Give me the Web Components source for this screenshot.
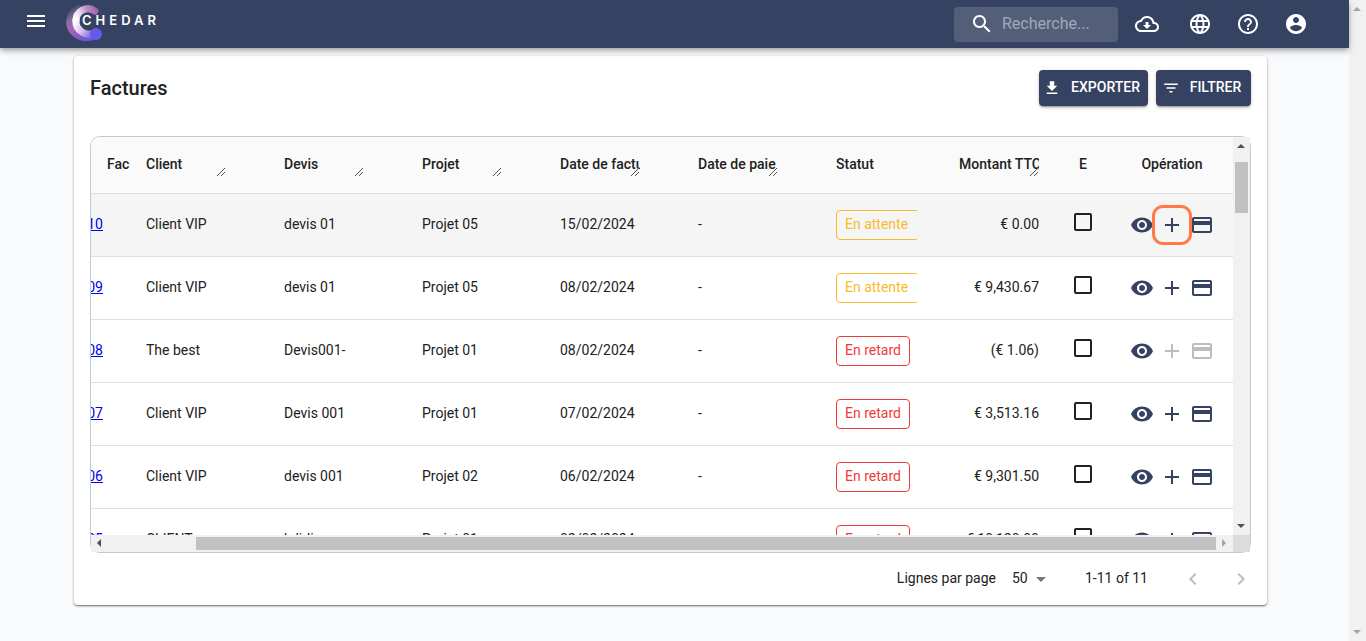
<!DOCTYPE html>
<html lang="fr">
<head>
<meta charset="utf-8">
<title>Chedar – Factures</title>
<style>
  body { margin: 0; font-family: Roboto, "Liberation Sans", sans-serif; font-size: 14px; color: #212121; background: #f9fafc; }
</style>
</head>
<body>
<chedar-app></chedar-app>
<script>
const ICONS = {
  menu: 'M3 18h18v-2H3v2zm0-5h18v-2H3v2zm0-7v2h18V6H3z',
  search: 'M15.5 14h-.79l-.28-.27C15.41 12.59 16 11.11 16 9.5 16 5.91 13.09 3 9.5 3S3 5.91 3 9.5 5.91 16 9.5 16c1.61 0 3.09-.59 4.23-1.57l.27.28v.79l5 4.99L20.49 19l-4.99-5zm-6 0C7.01 14 5 11.99 5 9.5S7.01 5 9.5 5 14 7.01 14 9.5 11.99 14 9.5 14z',
  cloud: 'M19.35 10.04C18.67 6.59 15.64 4 12 4 9.11 4 6.6 5.64 5.35 8.04 2.34 8.36 0 10.91 0 14c0 3.31 2.69 6 6 6h13c2.76 0 5-2.24 5-5 0-2.64-2.05-4.78-4.65-4.96zM19 18H6c-2.21 0-4-1.79-4-4 0-2.05 1.53-3.76 3.56-3.97l1.07-.11.5-.95C8.08 7.14 9.94 6 12 6c2.62 0 4.88 1.86 5.39 4.43l.3 1.5 1.53.11c1.56.1 2.78 1.41 2.78 2.96 0 1.65-1.35 3-3 3zm-5.55-8h-2.9v3H8l4 4 4-4h-2.55z',
  globe: 'M11.99 2C6.47 2 2 6.48 2 12s4.47 10 9.99 10C17.52 22 22 17.52 22 12S17.52 2 11.99 2zm6.93 6h-2.95c-.32-1.25-.78-2.45-1.38-3.56 1.84.63 3.37 1.91 4.33 3.56zM12 4.04c.83 1.2 1.48 2.53 1.91 3.96h-3.82c.43-1.43 1.08-2.76 1.91-3.96zM4.26 14C4.1 13.36 4 12.69 4 12s.1-1.36.26-2h3.38c-.08.66-.14 1.32-.14 2s.06 1.34.14 2H4.26zm.82 2h2.95c.32 1.25.78 2.45 1.38 3.56-1.84-.63-3.37-1.9-4.33-3.56zm2.95-8H5.08c.96-1.66 2.49-2.93 4.33-3.56C8.81 5.55 8.35 6.75 8.03 8zM12 19.96c-.83-1.2-1.48-2.53-1.91-3.96h3.82c-.43 1.43-1.08 2.76-1.91 3.96zM14.34 14H9.66c-.09-.66-.16-1.32-.16-2s.07-1.35.16-2h4.68c.09.65.16 1.32.16 2s-.07 1.34-.16 2zm.25 5.56c.6-1.11 1.06-2.31 1.38-3.56h2.95c-.96 1.65-2.49 2.93-4.33 3.56zM16.36 14c.08-.66.14-1.32.14-2s-.06-1.34-.14-2h3.38c.16.64.26 1.31.26 2s-.1 1.36-.26 2h-3.38z',
  help: 'M11 18h2v-2h-2v2zm1-16C6.48 2 2 6.48 2 12s4.48 10 10 10 10-4.48 10-10S17.52 2 12 2zm0 18c-4.41 0-8-3.59-8-8s3.59-8 8-8 8 3.59 8 8-3.59 8-8 8zm0-14c-2.21 0-4 1.79-4 4h2c0-1.1.9-2 2-2s2 .9 2 2c0 2-3 1.75-3 5h2c0-2.25 3-2.5 3-5 0-2.21-1.79-4-4-4z',
  account: 'M12 2C6.48 2 2 6.48 2 12s4.48 10 10 10 10-4.48 10-10S17.52 2 12 2zm0 3c1.66 0 3 1.34 3 3s-1.34 3-3 3-3-1.34-3-3 1.34-3 3-3zm0 14.2c-2.5 0-4.71-1.28-6-3.22.03-1.99 4-3.08 6-3.08 1.99 0 5.97 1.09 6 3.08-1.29 1.94-3.5 3.22-6 3.22z',
  download: 'M19 9h-4V3H9v6H5l7 7 7-7zM5 18v2h14v-2H5z',
  filter: 'M10 18h4v-2h-4v2zM3 6v2h18V6H3zm3 7h12v-2H6v2z',
  eye: 'M12 4.5C7 4.5 2.73 7.61 1 12c1.73 4.39 6 7.5 11 7.5s9.27-3.11 11-7.5c-1.73-4.39-6-7.5-11-7.5zM12 17c-2.76 0-5-2.24-5-5s2.24-5 5-5 5 2.24 5 5-2.24 5-5 5zm0-8c-1.66 0-3 1.34-3 3s1.34 3 3 3 3-1.34 3-3-1.34-3-3-3z',
  plus: 'M19 13h-6v6h-2v-6H5v-2h6V5h2v6h6v2z',
  card: 'M20 4H4c-1.11 0-1.99.89-1.99 2L2 18c0 1.11.89 2 2 2h16c1.11 0 2-.89 2-2V6c0-1.11-.89-2-2-2zm0 14H4v-6h16v6zm0-10H4V6h16v2z',
  drop: 'M7 10l5 5 5-5z',
  left: 'M15.41 7.41L14 6l-6 6 6 6 1.41-1.41L10.83 12z',
  right: 'M10 6L8.59 7.41 13.17 12l-4.58 4.59L10 18l6-6z'
};

class Base extends HTMLElement {
  connectedCallback() {
    if (!this.shadowRoot) this.attachShadow({ mode: 'open' }).innerHTML = this.view();
  }
}

/* Square glyph; --size sets its side */
customElements.define('ui-icon', class extends Base {
  view() {
    return `<style>:host{display:block;width:var(--size,24px);height:var(--size,24px);flex:none}svg{display:block;width:100%;height:100%;fill:currentColor}</style>
    <svg viewBox="0 0 24 24" aria-hidden="true"><path d="${ICONS[this.getAttribute('name')]}"/></svg>`;
  }
});

customElements.define('brand-logo', class extends Base {
  view() {
    return `<style>
      :host{display:grid;align-items:start}
      svg,span{grid-area:1/1}
      svg{display:block;width:42px;height:40px}
      span{padding:9px 0 0 16px;color:#fff;font:600 13px/16px Inter,sans-serif;letter-spacing:4px}
    </style>
    <svg viewBox="0 0 42 40" aria-hidden="true">
      <defs>
        <linearGradient id="o" gradientUnits="userSpaceOnUse" x1="6" y1="2" x2="28" y2="36">
          <stop offset="0" stop-color="#8b7fb0" stop-opacity="0"/><stop offset=".3" stop-color="#9d78b4" stop-opacity=".8"/><stop offset=".5" stop-color="#a864b4"/><stop offset=".75" stop-color="#8459cc"/><stop offset="1" stop-color="#6559ea"/>
        </linearGradient>
        <linearGradient id="i" gradientUnits="userSpaceOnUse" x1="8" y1="18" x2="31" y2="8">
          <stop offset="0" stop-color="#fff"/><stop offset=".3" stop-color="#eedfee"/><stop offset=".65" stop-color="#bb8fc4"/><stop offset="1" stop-color="#a560b0"/>
        </linearGradient>
        <linearGradient id="b" gradientUnits="userSpaceOnUse" x1="9" y1="18" x2="29" y2="32">
          <stop offset="0" stop-color="#fff"/><stop offset=".45" stop-color="#d6c3ea"/><stop offset=".75" stop-color="#9a88e4"/><stop offset="1" stop-color="#6559ea"/>
        </linearGradient>
      </defs>
      <path d="M12 6A16 16 0 0 0 4 20A16 16 0 0 0 20 34Q27 34 31 31" fill="none" stroke="url(#o)" stroke-width="8" stroke-linecap="round"/>
      <path d="M29 8A12 12 0 0 0 10 18" fill="none" stroke="url(#i)" stroke-width="7"  stroke-linecap="round"/>
      <path d="M10 17A13 13 0 0 0 30 29" fill="none" stroke="url(#b)" stroke-width="7" stroke-linecap="round"/>
      <circle cx="30" cy="31" r="6" fill="#6559ea"/>
    </svg><span>CHEDAR</span>`;
  }
});

customElements.define('app-bar', class extends Base {
  view() {
    return `<style>
      :host{display:block;position:relative;z-index:1;background:#364262;color:#fff;box-shadow:0 2px 4px -1px rgba(0,0,0,.2),0 4px 5px rgba(0,0,0,.14),0 1px 10px rgba(0,0,0,.12)}
      header{display:flex;align-items:center;height:48px;padding:0 29px 0 24px;box-sizing:border-box}
      button{all:unset;box-sizing:border-box;display:grid;place-items:center;width:48px;height:48px;cursor:pointer}
      .menu{width:24px;height:42px;align-self:flex-start}
      brand-logo{align-self:flex-start;margin:3px 0 0 18px}
      .search{display:flex;align-items:center;gap:8px;margin-left:auto;width:164px;height:35px;padding-left:16px;box-sizing:border-box;border-radius:4px;background:rgba(255,255,255,.15)}
      input{flex:1;min-width:0;border:0;padding:0;background:none;outline:0;color:#fff;font:400 16px/20px Roboto,sans-serif}
      input::placeholder{color:#fff;opacity:.45}
      .cloud{width:58px}
    </style>
    <header>
      <button class="menu" aria-label="Menu"><ui-icon name="menu"></ui-icon></button>
      <brand-logo></brand-logo>
      <label class="search"><ui-icon name="search"></ui-icon><input type="search" placeholder="Recherche..." aria-label="Recherche"></label>
      <button class="cloud" aria-label="Téléchargements"><ui-icon name="cloud"></ui-icon></button>
      <button aria-label="Langue"><ui-icon name="globe"></ui-icon></button>
      <button aria-label="Aide"><ui-icon name="help"></ui-icon></button>
      <button aria-label="Compte"><ui-icon name="account"></ui-icon></button>
    </header>`;
  }
});

/* Scroll bar with arrow ends; --before and --length place the thumb */
customElements.define('scroll-bar', class extends Base {
  view() {
    const h = this.hasAttribute('horizontal');
    const a = h ? ['10,4 10,12 6,8', '6,4 6,12 10,8'] : ['4,11 12,11 8,7', '4,6 12,6 8,10'];
    const thumb = this.hasAttribute('thumb') ? '<i></i>' : '';
    return `<style>
      :host{display:flex;flex-direction:${h ? 'row' : 'column'};background:#f1f1f1;${h ? 'height' : 'width'}:17px}
      svg{display:block;width:17px;height:17px;flex:none;fill:var(--start,#a3a3a3)}
      svg:last-of-type{fill:var(--end,#a3a3a3)}
      div{flex:1;display:flex;min-width:0;min-height:0;flex-direction:${h ? 'row' : 'column'};padding:${h ? '2px 0' : '0 2px'}}
      i{background:#c1c1c1;${h ? 'margin-left' : 'margin-top'}:var(--before);flex:0 0 var(--length)}
    </style><svg viewBox="0 0 17 17"><polygon points="${a[0]}"/></svg><div>${thumb}</div><svg viewBox="0 0 17 17"><polygon points="${a[1]}"/></svg>`;
  }
});

customElements.define('action-button', class extends Base {
  view() {
    return `<style>
      :host{display:block}
      button{display:flex;align-items:center;justify-content:center;gap:10px;height:36px;min-width:95px;padding:0 8px 2px 4px;border:0;border-radius:4px;background:#364262;color:#fff;font:500 14px/24px Roboto,sans-serif;--size:18px;box-shadow:0 3px 1px -2px rgba(0,0,0,.2),0 2px 2px rgba(0,0,0,.14),0 1px 5px rgba(0,0,0,.12);cursor:pointer}
      ui-icon{margin-top:2px}
    </style><button><ui-icon name="${this.getAttribute('icon')}"></ui-icon><slot></slot></button>`;
  }
});

customElements.define('status-chip', class extends Base {
  view() {
    return `<style>
      :host{display:block;overflow:hidden;width:81px}
      span{display:inline-block;vertical-align:top;box-sizing:border-box;height:30px;padding:0 8px;border:1px solid;border-radius:4px;line-height:27px;white-space:nowrap;color:#ef3a3a}
      :host([pending]) span{color:#f8bb2d;min-width:84px}
    </style><span><slot></slot></span>`;
  }
});

customElements.define('row-actions', class extends Base {
  view() {
    const off = this.hasAttribute('locked') ? 'disabled' : '';
    return `<style>
      :host{display:flex;justify-content:center;gap:6px;color:#364262}
      button{all:unset;position:relative;cursor:pointer}
      button:disabled{color:#bdbdbd;cursor:default}
      :host([highlight]) .add::after{content:"";position:absolute;inset:-8px;border:3px solid #ff7a45;border-radius:11px}
    </style>
    <button aria-label="Voir"><ui-icon name="eye"></ui-icon></button>
    <button class="add" aria-label="Ajouter" ${off}><ui-icon name="plus"></ui-icon></button>
    <button aria-label="Paiement" ${off}><ui-icon name="card"></ui-icon></button>`;
  }
});

customElements.define('column-title', class extends Base {
  view() {
    return `<style>
      :host{display:block;position:relative;overflow:hidden;width:80px;height:24px;line-height:24px;white-space:nowrap}
      svg{position:absolute;right:0;bottom:0;width:10px;height:9px;stroke:#555;fill:none}
    </style><slot></slot><svg viewBox="0 0 10 9" aria-hidden="true"><path d="M1 9L9 1M5 9L9 5"/></svg>`;
  }
});

customElements.define('invoice-table', class extends Base {
  view() {
    const late = 'En retard', wait = 'En attente';
    const rows = [
      ['10', 'Client VIP', 'devis 01', 'Projet 05', '15/02/2024', wait, '€ 0.00', 'highlight'],
      ['09', 'Client VIP', 'devis 01', 'Projet 05', '08/02/2024', wait, '€ 9,430.67', ''],
      ['08', 'The best', 'Devis001-', 'Projet 01', '08/02/2024', late, '(€ 1.06)', 'locked'],
      ['07', 'Client VIP', 'Devis 001', 'Projet 01', '07/02/2024', late, '€ 3,513.16', ''],
      ['06', 'Client VIP', 'devis 001', 'Projet 02', '06/02/2024', late, '€ 9,301.50', ''],
      ['05', 'CLIENT', 'kdidi', 'Projet 01', '02/02/2024', late, '€ 10,120.00', '']
    ];
    const body = rows.map(r => `<tr class="${r[7]}">
      <td class="num"><div><a href="#facture-${r[0]}">${r[0]}</a></div></td>
      <td>${r[1]}</td><td>${r[2]}</td><td>${r[3]}</td><td>${r[4]}</td><td>-</td>
      <td><status-chip ${r[5] === wait ? 'pending' : ''}>${r[5]}</status-chip></td>
      <td class="amount">${r[6]}</td>
      <td class="check"><input type="checkbox" aria-label="Sélectionner la facture ${r[0]}"></td>
      <td class="ops"><row-actions ${r[7]}></row-actions></td></tr>`).join('');
    return `<style>
      :host{display:grid;grid-template-columns:minmax(0,1fr) 17px;border:1px solid #c3c9d0;border-radius:10px}
      .view{height:398px;overflow:hidden;border-top-left-radius:9px}
      table{width:100%;table-layout:fixed;border-collapse:separate;border-spacing:0}
      th,td{box-sizing:border-box;padding:0 16px;border-bottom:1px solid #e0e0e0;text-align:left;white-space:nowrap;line-height:20px}
      th{height:57px;padding-bottom:2px;background:#fafafa;font-weight:500;vertical-align:middle}
      td{height:63px;padding-bottom:2px}
      td:has(status-chip),td.ops{padding-bottom:0}
      .highlight td{background:#f5f5f5}
      .fac{padding-right:0}
      .num{padding:0 27px 2px 0}
      .num div{display:flex;justify-content:flex-end;overflow:hidden}
      a{color:#00e}
      .amount{text-align:right}
      .e,.ops{text-align:center;padding-left:0;padding-right:0}
      .check{padding:0 0 6px;text-align:center}
      input{appearance:none;display:block;width:18px;height:18px;margin:0 auto;border:2px solid #212121;border-radius:2px}
      .corner{background:#dcdcdc}
      .v{--start:#505050;--end:#505050;--before:8px;--length:51px}
      .h{--start:#505050;--before:88px;--length:calc(100% - 88px)}
    </style>
    <div class="view"><table>
      <colgroup><col style="width:39px"><col style="width:138px"><col style="width:138px"><col style="width:138px"><col style="width:138px"><col style="width:138px"><col style="width:123px"><col style="width:112px"><col style="width:56px"><col style="width:122px"></colgroup>
      <thead><tr><th class="fac">Fac</th>
      <th><column-title>Client</column-title></th><th><column-title>Devis</column-title></th><th><column-title>Projet</column-title></th>
      <th><column-title>Date de factu</column-title></th><th><column-title>Date de paie</column-title></th>
      <th>Statut</th><th><column-title>Montant TTC</column-title></th><th class="e">E</th><th class="ops">Opération</th></tr></thead>
      <tbody>${body}</tbody></table></div>
    <scroll-bar class="v" thumb></scroll-bar>
    <scroll-bar class="h" horizontal thumb></scroll-bar>
    <div class="corner"></div>`;
  }
});

customElements.define('table-pager', class extends Base {
  view() {
    return `<style>
      :host{display:flex;align-items:center;justify-content:flex-end;height:52px;margin-right:-14px}
      .size{display:grid;align-items:center;margin:0 40px 0 16px;width:33px}
      select,.size ui-icon{grid-area:1/1}
      .size ui-icon{justify-self:end;margin-right:-8px;color:#757575;pointer-events:none}
      select{appearance:none;border:0;padding:0 0 2px;background:none;color:inherit;font:inherit;line-height:20px}
      label,p{padding-bottom:2px}
      p{margin:0 21px 0 0}
      button{all:unset;display:grid;place-items:center;width:48px;height:48px;color:#bdbdbd}
    </style>
    <label for="n">Lignes par page</label>
    <div class="size"><select id="n"><option>50</option><option>100</option></select><ui-icon name="drop"></ui-icon></div>
    <p>1-11 of 11</p>
    <button disabled aria-label="Page précédente"><ui-icon name="left"></ui-icon></button>
    <button disabled aria-label="Page suivante"><ui-icon name="right"></ui-icon></button>`;
  }
});

customElements.define('page-card', class extends Base {
  view() {
    return `<style>
      :host{display:block;padding:14px 16px 0;border-radius:4px;background:#fff;box-shadow:0 2px 1px -1px rgba(0,0,0,.2),0 1px 1px rgba(0,0,0,.14),0 1px 3px rgba(0,0,0,.35)}
      .head{display:flex;align-items:center;gap:8px;margin-bottom:30px}
      h1{flex:1;margin:0;font-size:20px;line-height:32px;font-weight:500}
    </style>
    <div class="head"><h1>${this.getAttribute('heading')}</h1><slot name="actions"></slot></div><slot></slot>`;
  }
});

customElements.define('chedar-app', class extends Base {
  view() {
    return `<style>
      :host{display:grid;grid-template-columns:minmax(0,1fr) 17px;min-height:100vh}
      main{padding:8px 82px 36px 74px}
    </style>
    <div><app-bar></app-bar>
      <main><page-card heading="Factures">
        <action-button slot="actions" icon="download">EXPORTER</action-button>
        <action-button slot="actions" icon="filter">FILTRER</action-button>
        <invoice-table></invoice-table>
        <table-pager></table-pager>
      </page-card></main></div>
    <scroll-bar></scroll-bar>`;
  }
});
</script>
</body>
</html>
